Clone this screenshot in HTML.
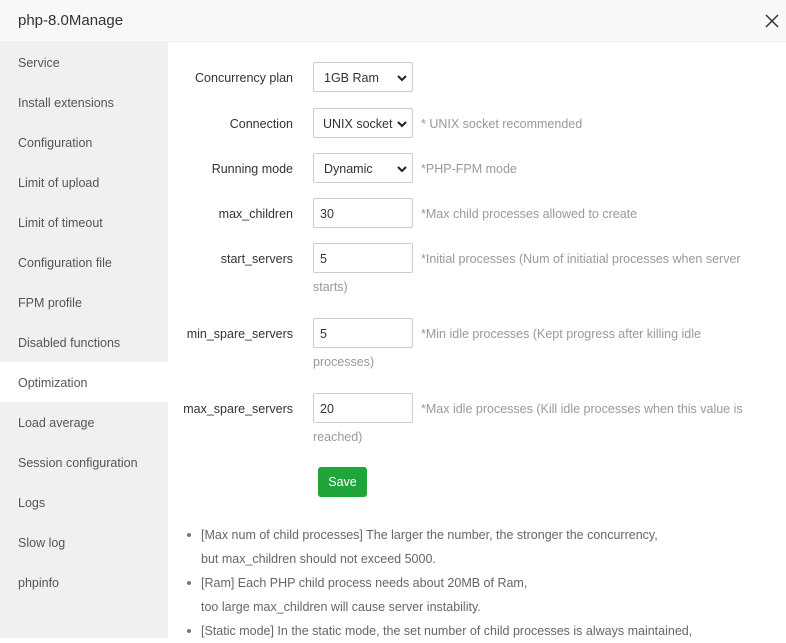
<html><head><style>
*{margin:0;padding:0;box-sizing:border-box}
body{width:786px;height:638px;overflow:hidden;font-family:"Liberation Sans",sans-serif;font-size:12.5px;color:#333;background:#fff;position:relative}
.hd{position:absolute;left:0;top:0;width:786px;height:42px;background:#f8f8f8;border-bottom:1px solid #eee;font-size:15px;line-height:42px;padding-left:18px}
.x{position:absolute;right:7px;top:14px;width:14px;height:14px}
.sb{position:absolute;left:0;top:42px;width:168px;height:596px;background:#f0f0f0}
.sb div{height:40px;line-height:42px;padding-left:18px;color:#555}
.sb .on{background:#fff}
.l{position:absolute;right:493px;text-align:right;line-height:32px}
.i{position:absolute;left:313px;width:100px;height:30px;border:1px solid #ccc;border-radius:2px;line-height:30px;padding-left:10px;color:#333}
.i svg{position:absolute;right:5px;top:11px}
.h{position:absolute;left:421px;color:#999;line-height:32px}
.w{position:absolute;left:313px;color:#999;margin-top:1px}
.btn{position:absolute;left:318px;top:467px;width:49px;height:30px;background:#20a53a;color:#fff;border-radius:3px;text-align:center;line-height:31px}
ul{position:absolute;left:201px;top:523px;color:#666;list-style:none;line-height:24px}
li{position:relative}
li:before{content:"";position:absolute;left:-14px;top:10px;width:4px;height:4px;border-radius:50%;background:#777}
</style></head><body>
<div class="hd">php-8.0Manage</div>
<svg class="x" viewBox="0 0 14 14"><path d="M1 1L13 13M13 1L1 13" stroke="#333" stroke-width="1.5"/></svg>
<div class="sb"><div>Service</div><div>Install extensions</div><div>Configuration</div><div>Limit of upload</div><div>Limit of timeout</div><div>Configuration file</div><div>FPM profile</div><div>Disabled functions</div><div class="on">Optimization</div><div>Load average</div><div>Session configuration</div><div>Logs</div><div>Slow log</div><div>phpinfo</div></div>

<div class="l" style="top:62px">Concurrency plan</div>
<div class="i" style="top:62px">1GB Ram<svg width="10" height="8" viewBox="0 0 10 8"><path d="M1 2L5 6L9 2" stroke="#222" stroke-width="2" fill="none"/></svg></div>
<div class="l" style="top:108px">Connection</div>
<div class="i" style="top:108px;padding-left:9px">UNIX socket<svg width="10" height="8" viewBox="0 0 10 8"><path d="M1 2L5 6L9 2" stroke="#222" stroke-width="2" fill="none"/></svg></div>
<div class="h" style="top:108px">* UNIX socket recommended</div>
<div class="l" style="top:153px">Running mode</div>
<div class="i" style="top:153px">Dynamic<svg width="10" height="8" viewBox="0 0 10 8"><path d="M1 2L5 6L9 2" stroke="#222" stroke-width="2" fill="none"/></svg></div>
<div class="h" style="top:153px">*PHP-FPM mode</div>
<div class="l" style="top:198px">max_children</div>
<div class="i" style="top:198px;padding-left:6px">30</div>
<div class="h" style="top:198px">*Max child processes allowed to create</div>
<div class="l" style="top:243px">start_servers</div>
<div class="i" style="top:243px;padding-left:6px">5</div>
<div class="h" style="top:243px">*Initial processes (Num of initiatial processes when server</div>
<div class="w" style="top:279px">starts)</div>
<div class="l" style="top:318px">min_spare_servers</div>
<div class="i" style="top:318px;padding-left:6px">5</div>
<div class="h" style="top:318px">*Min idle processes (Kept progress after killing idle</div>
<div class="w" style="top:354px">processes)</div>
<div class="l" style="top:393px">max_spare_servers</div>
<div class="i" style="top:393px;padding-left:6px">20</div>
<div class="h" style="top:393px">*Max idle processes (Kill idle processes when this value is</div>
<div class="w" style="top:429px">reached)</div>
<div class="btn">Save</div>
<ul>
<li>[Max num of child processes] The larger the number, the stronger the concurrency,<br>but max_children should not exceed 5000.</li>
<li>[Ram] Each PHP child process needs about 20MB of Ram,<br>too large max_children will cause server instability.</li>
<li>[Static mode] In the static mode, the set number of child processes is always maintained,</li>
</ul>
</body></html>
